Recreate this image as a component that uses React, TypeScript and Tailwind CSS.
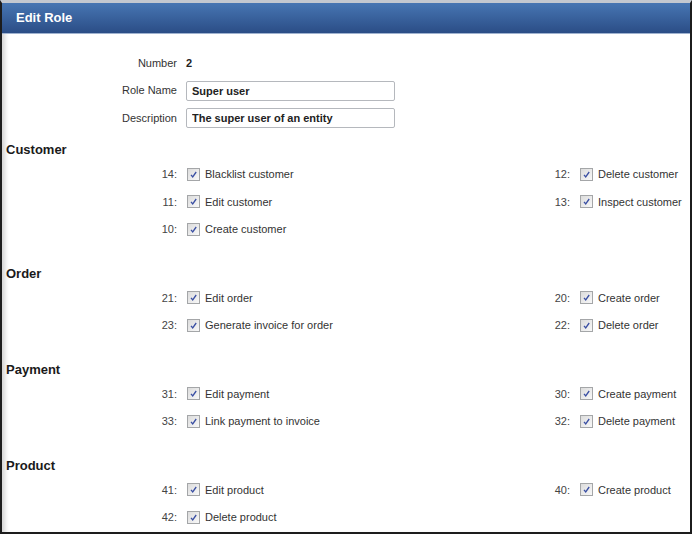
import React from 'react'

type Perm = { id: number; label: string }
type Section = { title: string; rows: [Perm, Perm | null][] }

const sections: Section[] = [
  {
    title: 'Customer',
    rows: [
      [{ id: 14, label: 'Blacklist customer' }, { id: 12, label: 'Delete customer' }],
      [{ id: 11, label: 'Edit customer' }, { id: 13, label: 'Inspect customer' }],
      [{ id: 10, label: 'Create customer' }, null],
    ],
  },
  {
    title: 'Order',
    rows: [
      [{ id: 21, label: 'Edit order' }, { id: 20, label: 'Create order' }],
      [{ id: 23, label: 'Generate invoice for order' }, { id: 22, label: 'Delete order' }],
    ],
  },
  {
    title: 'Payment',
    rows: [
      [{ id: 31, label: 'Edit payment' }, { id: 30, label: 'Create payment' }],
      [{ id: 33, label: 'Link payment to invoice' }, { id: 32, label: 'Delete payment' }],
    ],
  },
  {
    title: 'Product',
    rows: [
      [{ id: 41, label: 'Edit product' }, { id: 40, label: 'Create product' }],
      [{ id: 42, label: 'Delete product' }, null],
    ],
  },
]

function CheckBox() {
  return (
    <span className="w-[13px] h-[13px] shrink-0 border border-[#a4a6a8] bg-gradient-to-br from-[#dcdcdc] to-[#f8f8f8] flex items-center justify-center">
      <svg width="11" height="11" viewBox="0 0 11 11">
        <path d="M3 5.9 L4.7 7.9 L8.2 3" fill="none" stroke="#3a4fa3" strokeWidth="1.3" />
      </svg>
    </span>
  )
}

function PermItem({ perm }: { perm: Perm }) {
  return (
    <div className="flex items-center">
      <span className="w-[40px] text-right text-[#444]">{perm.id}:</span>
      <span className="ml-[10px]">
        <CheckBox />
      </span>
      <span className="ml-[5px] text-[#333]">{perm.label}</span>
    </div>
  )
}

export default function App() {
  return (
    <div
      className="w-[692px] h-[534px] bg-white border-l-2 border-r-2 border-b-2 border-[#1c1c1c] border-t-[3px] border-t-[#c3c8d0] shadow-[inset_6px_0_5px_-3px_rgba(0,0,0,0.18)] text-[11px]"
      style={{ fontFamily: '"Liberation Sans", Arial, sans-serif' }}
    >
      <header className="h-[31px] bg-gradient-to-b from-[#4776b3] to-[#2b4d86] border-b border-[#9fb2cf] flex items-center pl-[14px]">
        <h1 className="text-white font-bold text-[13px]">Edit Role</h1>
      </header>

      <div className="pt-[19px] flex flex-col gap-[7.5px]">
        <div className="flex items-center h-[20px]">
          <span className="w-[175px] text-right text-[#333]">Number</span>
          <span className="ml-[9px] font-bold text-[#222]">2</span>
        </div>
        <div className="flex items-center h-[20px]">
          <span className="w-[175px] text-right text-[#333]">Role Name</span>
          <input
            readOnly
            value="Super user"
            className="ml-[9px] w-[209px] h-[20px] border border-[#b5b8bd] rounded-[2px] px-[5px] font-bold text-[#222] outline-none"
          />
        </div>
        <div className="flex items-center h-[20px]">
          <span className="w-[175px] text-right text-[#333]">Description</span>
          <input
            readOnly
            value="The super user of an entity"
            className="ml-[9px] w-[209px] h-[20px] border border-[#b5b8bd] rounded-[2px] px-[5px] font-bold text-[#222] outline-none"
          />
        </div>
      </div>

      <div className="mt-[11.5px] flex flex-col gap-[20px]">
        {sections.map((s) => (
          <section key={s.title}>
            <h2 className="h-[21px] flex items-center pl-[4px] font-bold text-[13px] text-[#1a1a1a]">{s.title}</h2>
            {s.rows.map(([left, right], i) => (
              <div key={i} className="h-[27.5px] flex items-center">
                <div className="w-[528px] pl-[135px]">
                  <PermItem perm={left} />
                </div>
                {right && <PermItem perm={right} />}
              </div>
            ))}
          </section>
        ))}
      </div>
    </div>
  )
}
